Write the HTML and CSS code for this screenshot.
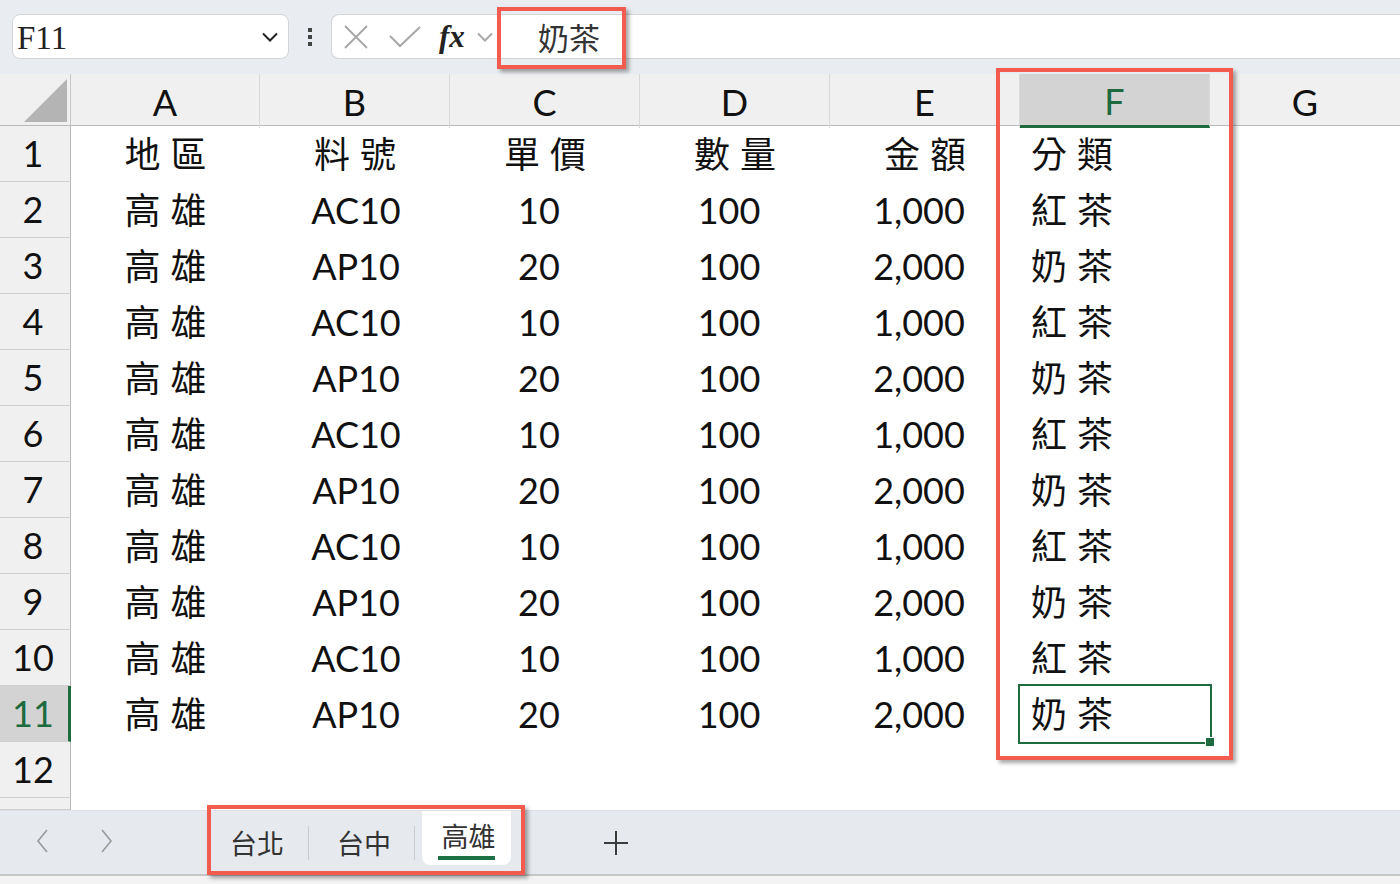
FILE: index.html
```html
<!DOCTYPE html>
<html lang="zh-Hant">
<head>
  <meta charset="UTF-8" />
  <meta name="viewport" content="width=device-width, initial-scale=1.0"/>
  <title>高雄</title>
  <link rel="stylesheet" href="styles.css">
</head>
<body>
  <div class="toolbar">
    <div class="namebox">
      <span class="ref">F11</span>
      <svg class="chev" width="16" height="10" viewBox="0 0 16 10"><path d="M1 1.5 L8 8.5 L15 1.5" fill="none" stroke="#222" stroke-width="2"/></svg>
    </div>
    <div class="dots"><i></i><i></i><i></i></div>
    <div class="formula">
      <div class="icons">
        <svg width="26" height="26" viewBox="0 0 26 26"><path d="M2 2 L24 24 M24 2 L2 24" stroke="#a8a8a8" stroke-width="2" fill="none"/></svg>
        <svg width="32" height="22" viewBox="0 0 32 22"><path d="M1 10 L11 20 L31 1" stroke="#a8a8a8" stroke-width="2" fill="none"/></svg>
        <span class="fx">fx</span>
        <svg width="16" height="10" viewBox="0 0 16 10"><path d="M1 1.5 L8 8.5 L15 1.5" fill="none" stroke="#a8a8a8" stroke-width="2"/></svg>
      </div>
      <div class="content">奶茶</div>
    </div>
  </div>

  <div class="sheet">
    <div class="row head">
      <div class="corner"><svg width="71" height="51" viewBox="0 0 71 51"><polygon points="24,48 67,48 67,5" fill="#b4b4b4"/></svg></div>
      <div class="col">A</div><div class="col">B</div><div class="col">C</div><div class="col">D</div><div class="col">E</div><div class="col sel">F</div><div class="col last">G</div>
    </div>
    <div class="row">
      <div class="rh">1</div><div class="c zh">地區</div><div class="c zh">料號</div><div class="c zh">單價</div><div class="c zh">數量</div><div class="c zh">金額</div><div class="l zh">分類</div><div class="l"></div>
    </div>
    <div class="row">
      <div class="rh">2</div><div class="c zh">高雄</div><div class="c">AC10</div><div class="c n">10</div><div class="c n">100</div><div class="c n">1,000</div><div class="l zh">紅茶</div><div class="l"></div>
    </div>
    <div class="row">
      <div class="rh">3</div><div class="c zh">高雄</div><div class="c">AP10</div><div class="c n">20</div><div class="c n">100</div><div class="c n">2,000</div><div class="l zh">奶茶</div><div class="l"></div>
    </div>
    <div class="row">
      <div class="rh">4</div><div class="c zh">高雄</div><div class="c">AC10</div><div class="c n">10</div><div class="c n">100</div><div class="c n">1,000</div><div class="l zh">紅茶</div><div class="l"></div>
    </div>
    <div class="row">
      <div class="rh">5</div><div class="c zh">高雄</div><div class="c">AP10</div><div class="c n">20</div><div class="c n">100</div><div class="c n">2,000</div><div class="l zh">奶茶</div><div class="l"></div>
    </div>
    <div class="row">
      <div class="rh">6</div><div class="c zh">高雄</div><div class="c">AC10</div><div class="c n">10</div><div class="c n">100</div><div class="c n">1,000</div><div class="l zh">紅茶</div><div class="l"></div>
    </div>
    <div class="row">
      <div class="rh">7</div><div class="c zh">高雄</div><div class="c">AP10</div><div class="c n">20</div><div class="c n">100</div><div class="c n">2,000</div><div class="l zh">奶茶</div><div class="l"></div>
    </div>
    <div class="row">
      <div class="rh">8</div><div class="c zh">高雄</div><div class="c">AC10</div><div class="c n">10</div><div class="c n">100</div><div class="c n">1,000</div><div class="l zh">紅茶</div><div class="l"></div>
    </div>
    <div class="row">
      <div class="rh">9</div><div class="c zh">高雄</div><div class="c">AP10</div><div class="c n">20</div><div class="c n">100</div><div class="c n">2,000</div><div class="l zh">奶茶</div><div class="l"></div>
    </div>
    <div class="row">
      <div class="rh">10</div><div class="c zh">高雄</div><div class="c">AC10</div><div class="c n">10</div><div class="c n">100</div><div class="c n">1,000</div><div class="l zh">紅茶</div><div class="l"></div>
    </div>
    <div class="row">
      <div class="rh sel">11</div><div class="c zh">高雄</div><div class="c">AP10</div><div class="c n">20</div><div class="c n">100</div><div class="c n">2,000</div><div class="l zh active">奶茶</div><div class="l"></div>
    </div>
    <div class="row">
      <div class="rh">12</div><div class="c"></div><div class="c"></div><div class="c"></div><div class="c"></div><div class="c"></div><div class="l"></div><div class="l"></div>
    </div>
    <div class="row part">
      <div class="rh"></div>
    </div>
  </div>

  <div class="tabbar">
    <div class="arrows">
      <span class="arrow"><svg width="12" height="24" viewBox="0 0 12 24"><path d="M11 1 L2 12 L11 23" fill="none" stroke="#9a9a9a" stroke-width="1.6"/></svg></span>
      <span class="arrow"><svg width="12" height="24" viewBox="0 0 12 24"><path d="M1 1 L10 12 L1 23" fill="none" stroke="#9a9a9a" stroke-width="1.6"/></svg></span>
    </div>
    <div class="tabs">
      <div class="tab">台北</div>
      <div class="sep"></div>
      <div class="tab mid">台中</div>
      <div class="sep"></div>
      <div class="current"><span>高雄</span><i></i></div>
    </div>
    <div class="add">
      <svg width="24" height="24" viewBox="0 0 24 24"><path d="M12 0 V24 M0 12 H24" stroke="#3c3c3c" stroke-width="2"/></svg>
    </div>
  </div>
  <div class="status"></div>

  <div class="mark mark-formula"></div>
  <div class="mark mark-col"></div>
  <div class="mark mark-tabs"></div>
</body>
</html>
```

FILE: styles.css
```css
* {
  margin: 0;
  padding: 0;
  box-sizing: border-box;
}

body {
  width: 1400px;
  height: 884px;
  overflow: hidden;
  position: relative;
  background: #ffffff;
  font-family: Lato, "Noto Sans CJK TC", sans-serif;
  color: #111;
}

/* formula bar */
.toolbar {
  height: 74px;
  background: #e9ecf0;
  display: flex;
  align-items: flex-start;
  padding: 14px 0 0 12px;
}

.namebox {
  width: 277px;
  height: 45px;
  background: #fff;
  border: 1px solid #d3d5d8;
  border-radius: 8px;
  display: flex;
  align-items: center;
  justify-content: space-between;
  padding: 0 10px 0 4px;
}

.namebox .ref {
  font-family: "Liberation Serif", serif;
  font-size: 33px;
  color: #222;
  line-height: 1;
  padding-top: 4px;
}

.dots {
  width: 42px;
  height: 45px;
  display: flex;
  flex-direction: column;
  align-items: center;
  justify-content: center;
  gap: 3px;
}

.dots i {
  width: 4px;
  height: 4px;
  background: #444;
}

.formula {
  flex: 1;
  height: 45px;
  background: #fff;
  border: 1px solid #d3d5d8;
  border-right: none;
  border-radius: 8px 0 0 8px;
  display: flex;
  align-items: center;
}

.icons {
  display: flex;
  align-items: center;
  padding-left: 11px;
  width: 166px;
}

.icons svg:nth-child(1) { margin-right: 20px; }
.icons svg:nth-child(2) { margin-right: 18px; }

.fx {
  font-family: "Liberation Serif", serif;
  font-style: italic;
  font-weight: bold;
  font-size: 31px;
  color: #222;
  margin-right: 12px;
  line-height: 1;
}

.content {
  flex: 1;
  height: 43px;
  border-left: 1px solid #e2e2e2;
  border-radius: 8px 0 0 8px;
  padding-left: 39px;
  font-family: "Noto Sans CJK TC", sans-serif;
  font-size: 31px;
  line-height: 43px;
  color: #333;
}

/* grid */
.sheet {
  height: 736px;
  overflow: hidden;
}

.row {
  display: grid;
  grid-template-columns: 71px 189px repeat(6, 190px);
  height: 56px;
}

.row.head {
  height: 52px;
  background: #f0f0f0;
  border-bottom: 1px solid #b9b9b9;
}

.row.part {
  height: 12px;
}

.corner {
  border-right: 1px solid #c7c7c7;
}

.corner svg {
  display: block;
}

.col {
  font-size: 36px;
  line-height: 51px;
  padding-top: 3px;
  text-align: center;
  color: #111;
  border-right: 1px solid #d9d9d9;
}

.col.last {
  border-right: none;
}

.col.sel {
  background: #d3d3d3;
  color: #1e6b3f;
  border-bottom: 3px solid #1e6b3f;
  line-height: 48px;
}

.rh {
  background: #f0f0f0;
  border-right: 1px solid #b9b9b9;
  border-bottom: 1px solid #cfcfcf;
  font-size: 36px;
  line-height: 55px;
  text-align: center;
  padding-right: 4px;
  color: #111;
}

.rh.sel {
  background: #d3d3d3;
  color: #1e6b3f;
  border-right: 3px solid #1e6b3f;
  padding-right: 2px;
}

.c, .l {
  font-size: 36px;
  line-height: 56px;
  white-space: nowrap;
}

.c {
  text-align: center;
  padding-left: 2px;
}

.c.n {
  padding-left: 0;
  padding-right: 12px;
}

.l {
  text-align: left;
  padding-left: 11px;
}

.zh {
  letter-spacing: 10px;
}

.c.zh {
  padding-left: 10px;
}

.active {
  position: relative;
  outline: 2px solid #1e6b3f;
}

.active::after {
  content: "";
  position: absolute;
  right: -5px;
  bottom: -5px;
  width: 8px;
  height: 8px;
  background: #1e6b3f;
  border: 1px solid #fff;
}

/* sheet tabs */
.tabbar {
  height: 66px;
  background: #e6e9ee;
  border-top: 1px solid #dcdfe3;
  border-bottom: 2px solid #c6c6c6;
  display: flex;
  align-items: stretch;
}

.arrows {
  display: flex;
  padding-left: 22px;
  gap: 25px;
  width: 208px;
}

.arrow {
  width: 40px;
  display: flex;
  align-items: center;
  justify-content: center;
  padding-bottom: 4px;
}

.tabs {
  display: flex;
  align-items: flex-start;
  font-family: "Noto Sans CJK TC", sans-serif;
  font-size: 27px;
  color: #333;
  white-space: nowrap;
}

.tab {
  height: 63px;
  padding: 0 24px 0 22px;
  display: flex;
  align-items: center;
}

.tab.mid {
  padding-left: 28px;
  padding-right: 23px;
}

.sep {
  width: 1px;
  height: 34px;
  background: #c9cbcf;
  margin-top: 15px;
}

.current {
  margin-left: 7px;
  height: 54px;
  width: 89px;
  background: #fff;
  border-radius: 0 0 8px 8px;
  display: flex;
  flex-direction: column;
  align-items: center;
}

.current span {
  display: block;
  line-height: 27px;
  margin-top: 11px;
  padding-left: 4px;
}

.current i {
  display: block;
  width: 57px;
  height: 4px;
  background: #1e7145;
  margin-top: 7px;
}

.add {
  margin-left: 93px;
  display: flex;
  align-items: center;
}

.status {
  height: 8px;
  background: #f3f3f3;
}

/* red callout frames */
.mark {
  position: absolute;
  border: 4px solid #f25b4e;
  box-shadow: 3px 3px 4px rgba(0, 0, 0, 0.35);
}

.mark-formula {
  left: 497px;
  top: 7px;
  width: 129px;
  height: 62px;
}

.mark-col {
  left: 996px;
  top: 68px;
  width: 237px;
  height: 692px;
}

.mark-tabs {
  left: 207px;
  top: 805px;
  width: 318px;
  height: 70px;
}
```
